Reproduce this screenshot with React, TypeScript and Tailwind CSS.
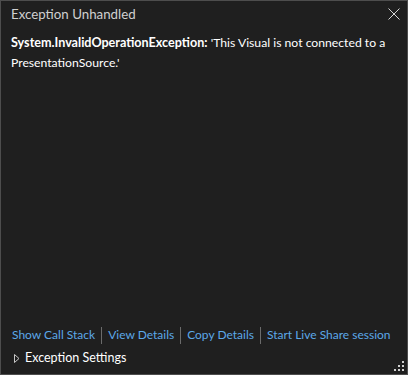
import React from "react";

export default function App() {
  const font = { fontFamily: 'Lato, "Noto Sans", sans-serif' };
  return (
    <div className="w-[408px] h-[375px] bg-[#1f1f1f] border border-[#4d4d4d] flex flex-col text-[#f1f1f1] relative" style={font}>
      <div className="flex items-start justify-between pl-[10px] pr-[6px] pt-[4px]">
        <div className="text-[13.3px] text-[#d0d0d0] leading-[18px]">Exception Unhandled</div>
        <svg width="14" height="14" viewBox="0 0 14 14" className="mt-[2px]">
          <path d="M1.5 1.5 L12.5 12.5 M12.5 1.5 L1.5 12.5" stroke="#d6d6d6" strokeWidth="1" />
        </svg>
      </div>
      <div className="px-[10px] pt-[10px] text-[12.2px] leading-[20px] text-white">
        <span className="font-bold text-[12.6px]">System.InvalidOperationException:</span> 'This Visual is not connected to a PresentationSource.'
      </div>
      <div className="flex-1" />
      <div className="flex items-center pl-[11px] text-[12px] text-[#5ca8e8] leading-[18px]">
        <span>Show Call Stack</span>
        <span className="mx-[6px] w-px h-[17px] bg-[#6b6b6b]" />
        <span>View Details</span>
        <span className="mx-[6px] w-px h-[17px] bg-[#6b6b6b]" />
        <span>Copy Details</span>
        <span className="mx-[6px] w-px h-[17px] bg-[#6b6b6b]" />
        <span>Start Live Share session</span>
      </div>
      <div className="flex items-center pl-[13px] pt-[5px] pb-[7px] text-[12.5px] leading-[18px] text-white">
        <svg width="6" height="9" viewBox="0 0 6 9" className="mr-[5px]">
          <path d="M0.5 0.5 L5 4.5 L0.5 8.5 Z" fill="none" stroke="#c8c8c8" strokeWidth="1" />
        </svg>
        <span>Exception Settings</span>
      </div>
      <svg width="12" height="12" viewBox="0 0 12 12" className="absolute right-[2px] bottom-[2px]">
        {[
          [9, 1], [9, 5], [5, 5], [9, 9], [5, 9], [1, 9],
        ].map(([x, y], i) => (
          <rect key={i} x={x} y={y} width="2" height="2" fill="#d0d0d0" />
        ))}
      </svg>
    </div>
  );
}
